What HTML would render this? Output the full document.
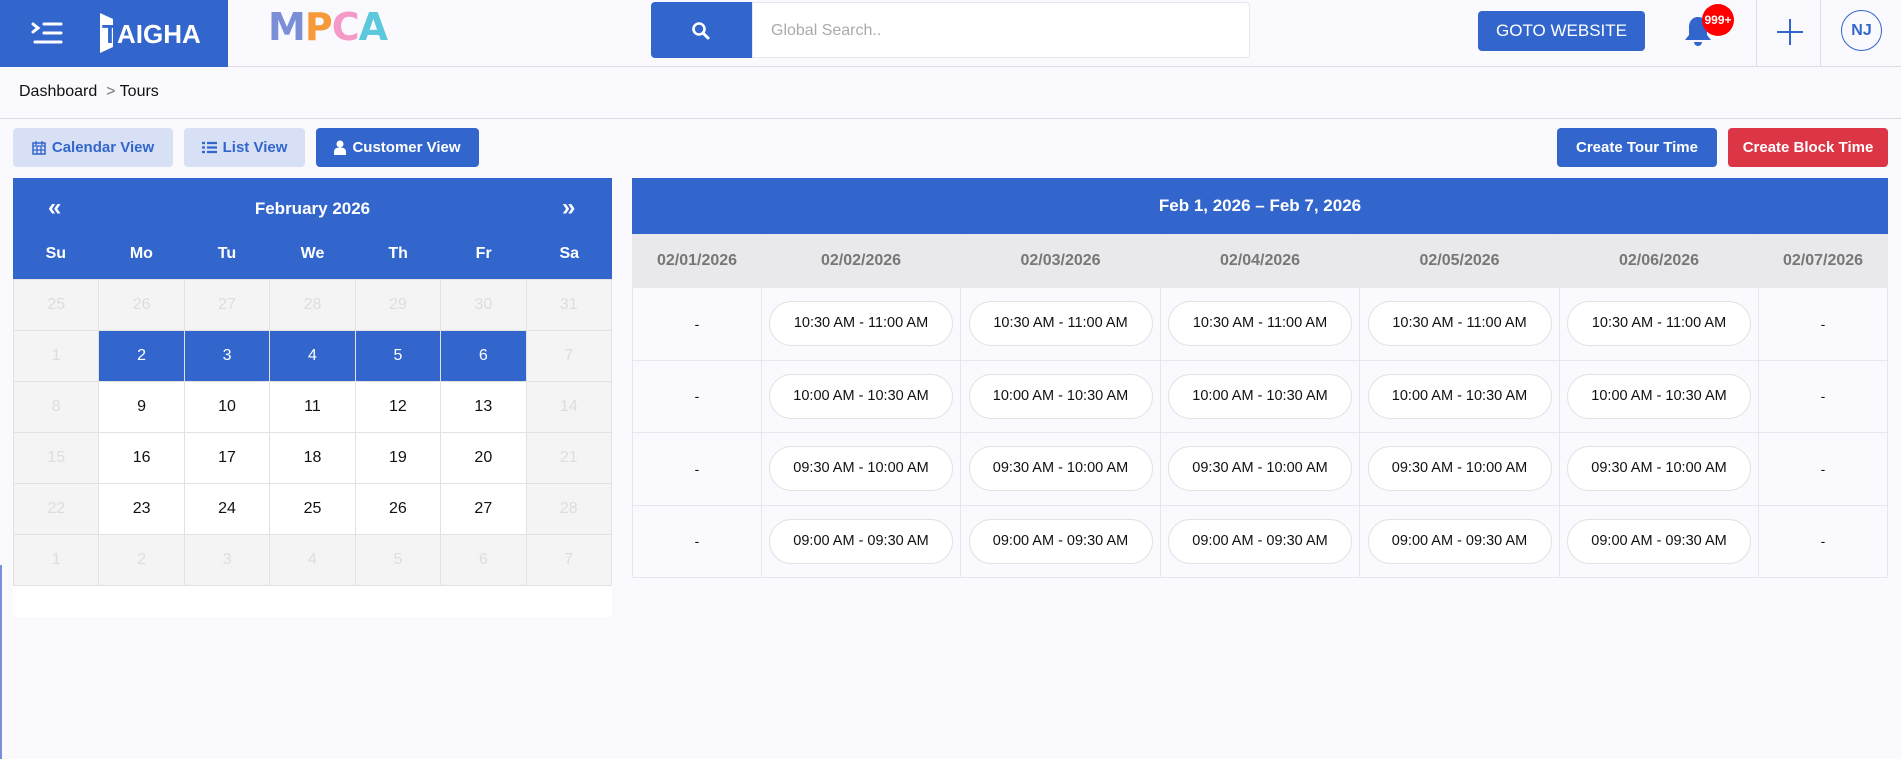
<!DOCTYPE html>
<html><head><meta charset="utf-8"><style>
*{box-sizing:border-box;margin:0;padding:0}
body{width:1901px;height:759px;overflow:hidden;background:#f9f9fe;font-family:"Liberation Sans",sans-serif;position:relative;color:#111}
.abs{position:absolute}
.hdr{left:0;top:0;width:1901px;height:67px;border-bottom:1px solid #dcdce4;background:#f9f9fe}
.btn{position:absolute;top:128px;height:39px;border-radius:4px;font-weight:bold;font-size:15px;display:flex;align-items:center;justify-content:center;gap:6px}
.lt{background:#d7e0f4;color:#3366cc}
.bl{background:#3366cc;color:#fff}
table{border-collapse:collapse;position:absolute;table-layout:fixed}
.cal td{height:51px;text-align:center;font-size:16px;border:1px solid #e2e2e2}
.cal .o{background:#f4f4f4;color:#ddd}
.cal .w{background:#fff;color:#111}
.cal .s{background:#3366cc;color:#fff}
.wk td{border:1px solid #e6e6ec;text-align:center;height:72.5px;background:#f9f9fe;font-size:14px}
.wk tr.h td{height:53px;background:#e9e8ea;color:#777;font-weight:bold;font-size:16px}
.pill{display:inline-block;width:184px;height:45px;line-height:43px;border:1px solid #e2e2e2;border-radius:23px;background:#fff;font-size:14.5px}
</style></head><body>
<div class="abs hdr"></div>
<div class="abs" style="left:0;top:0;width:228px;height:67px;background:#3366cc"></div>
<svg class="abs" style="left:30px;top:20px" width="34" height="26" viewBox="0 0 34 26"><g stroke="#fff" stroke-width="3" stroke-linecap="round" fill="none"><path d="M3 4l5 4-5 4"/><path d="M14 4h17M14 13h17M5 22h26"/></g></svg>
<div class="abs" style="left:100px;top:13px;width:13px;height:40px;background:#fff;clip-path:polygon(0 0,100% 15%,100% 85%,0 100%)"></div>
<div class="abs" style="left:102px;top:19px;color:#3366cc;font-weight:bold;font-size:26px">T</div>
<div class="abs" style="left:117px;top:19px;color:#fff;font-weight:bold;font-size:26px">AIGHA</div>
<div class="abs" style="left:268px;top:5px;font-weight:900;font-size:38px;font-family:'DejaVu Sans',sans-serif;letter-spacing:-1px"><span style="color:#7b8fd8">M</span><span style="color:#f79a3a">P</span><span style="color:#f49ac8">C</span><span style="color:#5bc8dc">A</span></div>
<div class="abs" style="left:651px;top:2px;width:101px;height:56px;background:#3366cc;border-radius:4px 0 0 4px"></div>
<svg class="abs" style="left:691px;top:21px" width="20" height="20" viewBox="0 0 20 20"><circle cx="8" cy="8" r="5.5" stroke="#fff" stroke-width="2.6" fill="none"/><path d="M12 12l5 5" stroke="#fff" stroke-width="3" stroke-linecap="round"/></svg>
<div class="abs" style="left:752px;top:2px;width:498px;height:56px;background:#fff;border:1px solid #e6e6ec;border-radius:0 4px 4px 0;color:#aaa;font-size:16px;padding:19px 0 0 18px">Global Search..</div>
<div class="abs" style="left:1478px;top:11px;width:167px;height:40px;background:#3366cc;border-radius:4px;color:#fff;font-size:17px;text-align:center;line-height:40px">GOTO WEBSITE</div>
<svg class="abs" style="left:1682px;top:14px" width="32" height="34" viewBox="0 0 32 34"><path d="M16 3c-6 0-9 5-9 10v8l-4 5h26l-4-5v-8c0-5-3-10-9-10z" fill="#3366cc"/><path d="M12 28a4 4 0 0 0 8 0z" fill="#3366cc"/></svg>
<div class="abs" style="left:1702px;top:4px;width:32px;height:32px;border-radius:50%;background:#f00;color:#fff;font-size:12px;font-weight:bold;text-align:center;line-height:32px">999+</div>
<div class="abs" style="left:1756px;top:0;width:1px;height:67px;background:#dcdce4"></div>
<div class="abs" style="left:1820px;top:0;width:1px;height:67px;background:#dcdce4"></div>
<svg class="abs" style="left:1775px;top:17px" width="30" height="30"><path d="M15 2v26M2 15h26" stroke="#3366cc" stroke-width="2"/></svg>
<div class="abs" style="left:1841px;top:10px;width:41px;height:41px;border:1.5px solid #3366cc;border-radius:50%;color:#3366cc;font-weight:bold;font-size:16px;text-align:center;line-height:40px">NJ</div>
<div class="abs" style="left:19px;top:83px;font-size:16px">Dashboard <span style="color:#777">&nbsp;&gt;</span> Tours</div>
<div class="abs" style="left:0;top:118px;width:1901px;height:1px;background:#dcdce4"></div>
<div class="abs" style="left:0;top:565px;width:2px;height:194px;background:#7b8fd8"></div>
<div class="btn lt" style="left:13px;width:160px"><svg width="14" height="15" viewBox="0 0 14 15"><rect x="1" y="3" width="12" height="11" fill="none" stroke="#3366cc" stroke-width="1.5"/><path d="M1 6h12M4 1v4M10 1v4M5 6v8M9 6v8M1 10h12" stroke="#3366cc" stroke-width="1.3"/></svg>Calendar View</div>
<div class="btn lt" style="left:184px;width:121px"><svg width="15" height="13"><path d="M0 2h3M5 2h10M0 6.5h3M5 6.5h10M0 11h3M5 11h10" stroke="#3366cc" stroke-width="2.2"/></svg>List View</div>
<div class="btn bl" style="left:316px;width:163px"><svg width="12" height="15"><circle cx="6" cy="4" r="3.5" fill="#fff"/><path d="M0 15v-3c0-3 2-4.5 6-4.5s6 1.5 6 4.5v3z" fill="#fff"/></svg>Customer View</div>
<div class="btn bl" style="left:1557px;width:160px">Create Tour Time</div>
<div class="btn" style="left:1728px;width:160px;background:#dc3545;color:#fff">Create Block Time</div>
<div class="abs" style="left:13px;top:178px;width:599px;height:439px;background:#fff"></div>
<div class="abs" style="left:13px;top:178px;width:599px;height:101px;background:#3366cc"></div>
<div class="abs" style="left:13px;top:199px;width:599px;text-align:center;color:#fff;font-weight:bold;font-size:17px">February 2026</div>
<div class="abs" style="left:48px;top:194px;color:#fff;font-weight:bold;font-size:24px">«</div>
<div class="abs" style="left:562px;top:194px;color:#fff;font-weight:bold;font-size:24px">»</div>
<div class="abs" style="left:13px;top:245px;width:599px;display:flex;color:#fff;font-weight:bold;font-size:16px"><div style="flex:1;text-align:center">Su</div><div style="flex:1;text-align:center">Mo</div><div style="flex:1;text-align:center">Tu</div><div style="flex:1;text-align:center">We</div><div style="flex:1;text-align:center">Th</div><div style="flex:1;text-align:center">Fr</div><div style="flex:1;text-align:center">Sa</div></div>
<table class="cal" style="left:13px;top:279px;width:599px">
<tr><td class="o">25</td><td class="o">26</td><td class="o">27</td><td class="o">28</td><td class="o">29</td><td class="o">30</td><td class="o">31</td></tr>
<tr><td class="o">1</td><td class="s">2</td><td class="s">3</td><td class="s">4</td><td class="s">5</td><td class="s">6</td><td class="o">7</td></tr>
<tr><td class="o">8</td><td class="w">9</td><td class="w">10</td><td class="w">11</td><td class="w">12</td><td class="w">13</td><td class="o">14</td></tr>
<tr><td class="o">15</td><td class="w">16</td><td class="w">17</td><td class="w">18</td><td class="w">19</td><td class="w">20</td><td class="o">21</td></tr>
<tr><td class="o">22</td><td class="w">23</td><td class="w">24</td><td class="w">25</td><td class="w">26</td><td class="w">27</td><td class="o">28</td></tr>
<tr><td class="o">1</td><td class="o">2</td><td class="o">3</td><td class="o">4</td><td class="o">5</td><td class="o">6</td><td class="o">7</td></tr>
</table>
<div class="abs" style="left:632px;top:178px;width:1256px;height:56px;background:#3366cc;color:#fff;font-weight:bold;font-size:17px;text-align:center;line-height:56px">Feb 1, 2026 – Feb 7, 2026</div>
<table class="wk" style="left:632px;top:234px;width:1256px">
<colgroup><col style="width:129px"><col style="width:199px"><col style="width:200px"><col style="width:199px"><col style="width:200px"><col style="width:199px"><col></colgroup>
<tr class="h"><td>02/01/2026</td><td>02/02/2026</td><td>02/03/2026</td><td>02/04/2026</td><td>02/05/2026</td><td>02/06/2026</td><td>02/07/2026</td></tr>
<tr><td>-</td><td><span class="pill">10:30 AM - 11:00 AM</span></td><td><span class="pill">10:30 AM - 11:00 AM</span></td><td><span class="pill">10:30 AM - 11:00 AM</span></td><td><span class="pill">10:30 AM - 11:00 AM</span></td><td><span class="pill">10:30 AM - 11:00 AM</span></td><td>-</td></tr>
<tr><td>-</td><td><span class="pill">10:00 AM - 10:30 AM</span></td><td><span class="pill">10:00 AM - 10:30 AM</span></td><td><span class="pill">10:00 AM - 10:30 AM</span></td><td><span class="pill">10:00 AM - 10:30 AM</span></td><td><span class="pill">10:00 AM - 10:30 AM</span></td><td>-</td></tr>
<tr><td>-</td><td><span class="pill">09:30 AM - 10:00 AM</span></td><td><span class="pill">09:30 AM - 10:00 AM</span></td><td><span class="pill">09:30 AM - 10:00 AM</span></td><td><span class="pill">09:30 AM - 10:00 AM</span></td><td><span class="pill">09:30 AM - 10:00 AM</span></td><td>-</td></tr>
<tr><td>-</td><td><span class="pill">09:00 AM - 09:30 AM</span></td><td><span class="pill">09:00 AM - 09:30 AM</span></td><td><span class="pill">09:00 AM - 09:30 AM</span></td><td><span class="pill">09:00 AM - 09:30 AM</span></td><td><span class="pill">09:00 AM - 09:30 AM</span></td><td>-</td></tr>
</table>
</body></html>
